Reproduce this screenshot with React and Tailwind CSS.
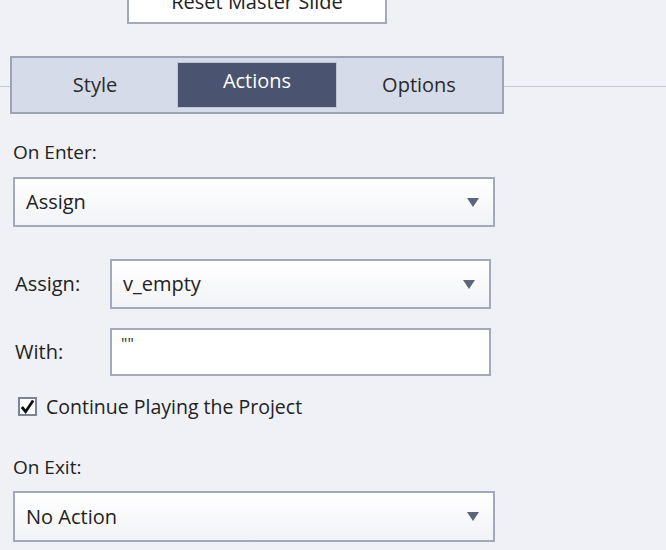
import React from 'react';

const font = { fontFamily: '"Open Sans", "Noto Sans", sans-serif' };

const Arrow = () => (
  <svg width="12" height="9" viewBox="0 0 12 9" className="shrink-0">
    <path d="M0 0 L12 0 L6 9 Z" fill="#5f6478" />
  </svg>
);

const Select = ({ value, className = '' }) => (
  <div
    className={`flex items-center justify-between h-[50px] border-2 border-[#a3a8ba] bg-gradient-to-b from-white to-[#f2f3f7] pl-[11px] pr-[14px] text-[20px] text-[#222] ${className}`}
  >
    <span>{value}</span>
    <Arrow />
  </div>
);

const App = () => {
  return (
    <div className="w-[666px] h-[550px] overflow-hidden bg-[#f0f1f6] relative" style={font}>
      {/* top button (cut off) */}
      <div className="flex justify-center">
        <div className="ml-[-152px] mt-[-14px] w-[260px] h-[38px] border-2 border-[#a3a8ba] bg-white flex items-end justify-center text-[20px] text-[#222] leading-[20px]">
          <span className="translate-y-[-10px]">Reset Master Slide</span>
        </div>
      </div>

      {/* tabs */}
      <div className="relative mt-[32px] h-[58px]">
        <div className="absolute left-0 right-0 top-[30px] h-px bg-[#c8cbd6]" />
        <div className="absolute left-[10px] top-0 w-[494px] h-[58px] border-2 border-[#9ea3b6] bg-[#d6dbe9] flex items-stretch p-[4px] gap-[3px]">
          <div className="flex-1 flex items-center justify-center text-[20px] text-[#2a2a2a]">Style</div>
          <div className="flex-1 flex items-center justify-center bg-[#4a5470] border border-[#bfc4d3] text-[20px] text-white pb-[8px]">Actions</div>
          <div className="flex-1 flex items-center justify-center text-[20px] text-[#2a2a2a]">Options</div>
        </div>
      </div>

      <div className="pl-[13px] pr-[171px]">
        <div className="mt-[25px] text-[19px] text-[#222] leading-[26px]">On Enter:</div>
        <Select value="Assign" className="mt-[12px]" />

        <div className="mt-[32px] flex items-center">
          <div className="w-[97px] pl-[2px] text-[20px] text-[#222]">Assign:</div>
          <Select value="v_empty" className="flex-1 mr-[4px] h-[48px]" />
        </div>
        <div className="mt-[19px] flex items-center">
          <div className="w-[97px] pl-[2px] text-[20px] text-[#222]">With:</div>
          <div className="flex-1 mr-[4px] h-[48px] border-2 border-[#a3a8ba] bg-white pl-[9px] pt-[4px] text-[16px] text-[#333] leading-[20px]">""</div>
        </div>

        <div className="mt-[16px] flex items-center pl-[5px] gap-[9px]">
          <div className="w-[19px] h-[19px] border-2 border-[#7d8296] bg-white flex items-center justify-center">
            <svg width="16" height="16" viewBox="0 0 16 16">
              <path d="M2 8 L6 13 L14 1" fill="none" stroke="#111" strokeWidth="3" />
            </svg>
          </div>
          <span className="text-[19.5px] text-[#222]">Continue Playing the Project</span>
        </div>

        <div className="mt-[33px] text-[19px] text-[#222] leading-[26px]">On Exit:</div>
        <Select value="No Action" className="mt-[11px] h-[51px]" />
      </div>
    </div>
  );
};

export default App;
